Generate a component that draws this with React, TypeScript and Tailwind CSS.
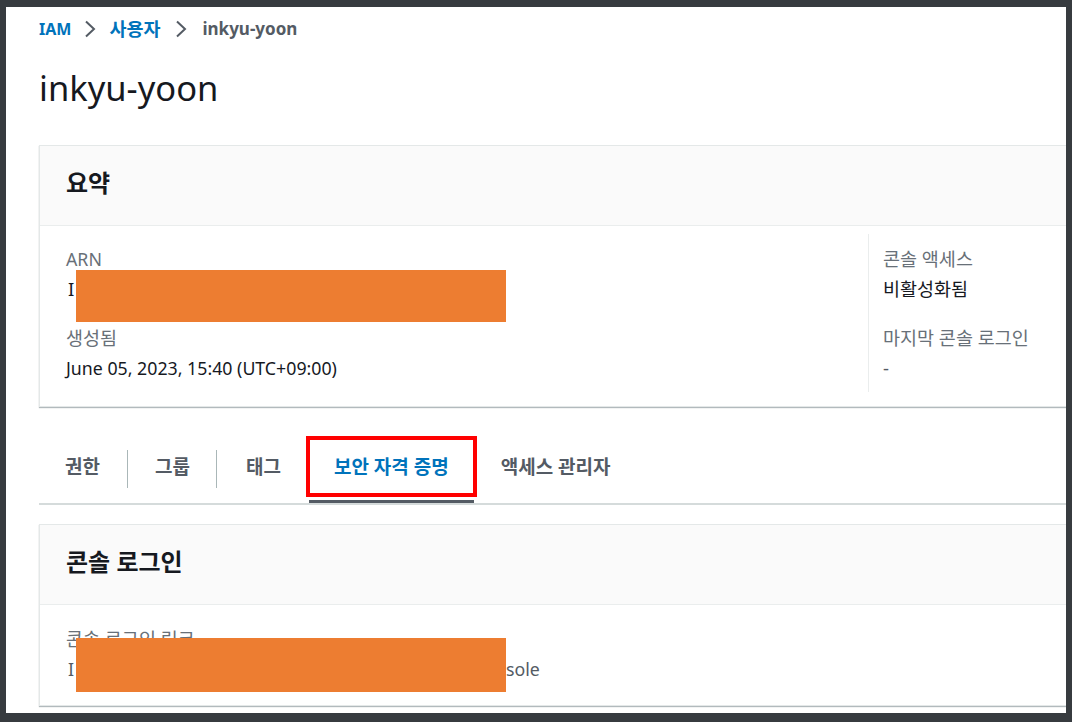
import React from "react";

const Chevron = ({ gap }: { gap: string }) => (
  <svg width="12" height="18" viewBox="0 0 12 18" className={`${gap} shrink-0`}>
    <path d="M2 1.5 L10 9 L2 16.5" fill="none" stroke="#545b64" strokeWidth="2" />
  </svg>
);

const Field = ({ label, value, first }: { label: React.ReactNode; value: React.ReactNode; first?: boolean }) => (
  <div className={first ? "" : "mt-[27px]"}>
    <div className="leading-[22px] text-[#687078]">{label}</div>
    <div className="mt-[8px] leading-[22px] text-[#16191f]">{value}</div>
  </div>
);

const tabs = [
  { label: "권한", pad: "pl-[26px] pr-[27px]" },
  { label: "그룹", pad: "pl-[27px] pr-[26px]" },
  { label: "태그", pad: "pl-[29px] pr-[28px]" },
  { label: "보안 자격 증명", pad: "px-[25px]" },
  { label: "액세스 관리자", pad: "px-[27px]" },
];

export default function App() {
  return (
    <div className="w-[1072px] h-[722px] bg-[#373b3f] pt-[7px] pl-[6px] pr-[6px] pb-[9px] font-['Noto_Sans','Noto_Sans_CJK_KR',sans-serif]">
      <div className="h-full bg-white overflow-hidden pl-[33px] pt-[11px]">
        <div className="w-[1100px]">
          {/* Breadcrumb */}
          <nav className="flex items-center h-[22px] font-bold leading-[22px]">
            <span className="text-[16px] text-[#0073bb]">IAM</span>
            <Chevron gap="mx-[13px]" />
            <span className="text-[18.5px] text-[#0073bb]">사용자</span>
            <Chevron gap="mx-[15px]" />
            <span className="text-[17px] text-[#545b64]">inkyu-yoon</span>
          </nav>

          <h1 className="mt-[28px] text-[34.5px] leading-[40px] text-[#16191f]">inkyu-yoon</h1>

          {/* Summary */}
          <section className="mt-[37px] bg-white border border-[#e4e8e8] shadow-[0_1px_1px_0_rgba(0,28,36,0.3)]">
            <div className="bg-[#fafafa] border-b border-[#eaeded] pl-[26px] pt-[22px] pb-[27px] text-[24px] leading-[30px] font-bold text-[#16191f]">
              요약
            </div>
            <div className="flex pt-[8px] pb-[14px] text-[18.5px]">
              <div className="w-[828px] shrink-0 pl-[26px] pt-[14px] pb-[13px]">
                <Field
                  first
                  label={<span className="text-[17.75px]">ARN</span>}
                  value={
                    <div className="relative">
                      <span className="ml-[2px]">I</span>
                      <div className="absolute left-[10px] top-[-8px] w-[430px] h-[52px] bg-[#ed7d31]" />
                    </div>
                  }
                />
                <Field label="생성됨" value={<span className="text-[17.75px]">June 05, 2023, 15:40 (UTC+09:00)</span>} />
              </div>
              <div className="flex-1 border-l border-[#eaeded] pl-[14px] pt-[14px] pb-[13px]">
                <Field first label="콘솔 액세스" value="비활성화됨" />
                <Field label="마지막 콘솔 로그인" value={<span className="text-[#545b64]">-</span>} />
              </div>
            </div>
          </section>

          {/* Tabs */}
          <div className="mt-[27px] flex border-b-2 border-[#d5dbdb] text-[19px] font-bold">
            {tabs.map((t, i) => {
              const active = i === 3;
              return (
                <React.Fragment key={t.label}>
                  {i > 0 && i < 3 && <div className="w-px h-[38px] bg-[#aab7b8] self-center" />}
                  <div
                    className={`relative h-[69px] flex items-center border-b-[3px] ${t.pad} ${
                      active ? "border-[#545b64] text-[#0073bb]" : "border-transparent text-[#545b64]"
                    }`}
                  >
                    {t.label}
                    {active && (
                      <div className="absolute left-[-3px] top-[2px] w-[171px] h-[61px] border-[4px] border-[#ff0000]" />
                    )}
                  </div>
                </React.Fragment>
              );
            })}
          </div>

          {/* Console sign-in */}
          <section className="mt-[19px] bg-white border border-[#e4e8e8] shadow-[0_1px_1px_0_rgba(0,28,36,0.3)]">
            <div className="bg-[#fafafa] border-b border-[#eaeded] pl-[26px] pt-[22px] pb-[27px] text-[24px] leading-[30px] font-bold text-[#16191f]">
              콘솔 로그인
            </div>
            <div className="pl-[26px] pt-[23px] pb-[25px] text-[18.5px]">
              <div className="leading-[22px] text-[#687078]">콘솔 로그인 링크</div>
              <div className="relative mt-[8px] leading-[22px] text-[#545b64] flex text-[17.75px]">
                <span className="ml-[2px]">I</span>
                <span className="ml-[432px]">sole</span>
                <div className="absolute left-[10px] top-[-20px] w-[430px] h-[54px] bg-[#ed7d31]" />
              </div>
            </div>
          </section>
        </div>
      </div>
    </div>
  );
}
